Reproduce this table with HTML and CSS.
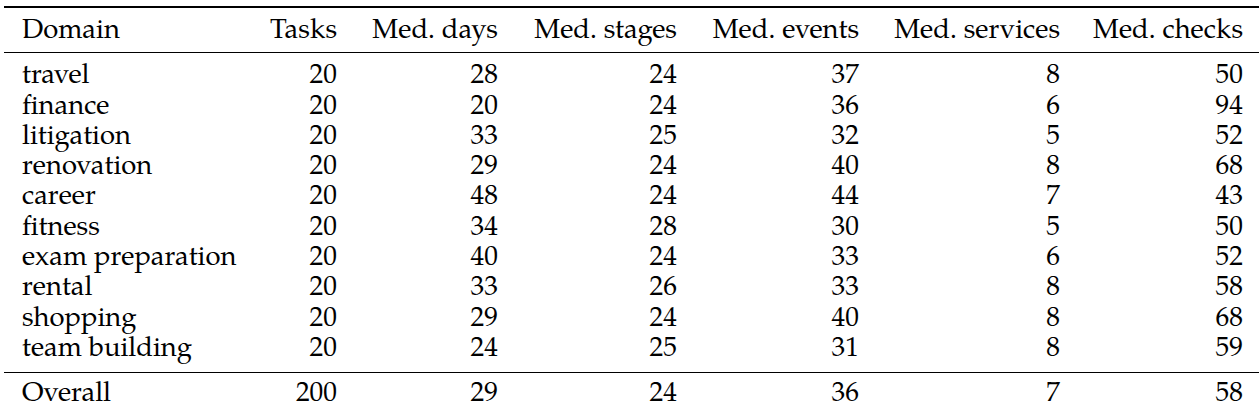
FILE: index.html
```html
<!DOCTYPE html>
<html lang="en">
<head>
<meta charset="utf-8">
<title>Domain statistics</title>
<link rel="stylesheet" href="styles.css">
</head>
<body>
<table class="stats">
  <colgroup>
    <col class="c-domain">
    <col class="c-tasks">
    <col class="c-days">
    <col class="c-stages">
    <col class="c-events">
    <col class="c-services">
    <col class="c-checks">
  </colgroup>
  <thead>
    <tr class="head">
      <th class="name">Domain</th>
      <th>Tasks</th>
      <th>Med. days</th>
      <th>Med. stages</th>
      <th>Med. events</th>
      <th>Med. services</th>
      <th>Med. checks</th>
    </tr>
  </thead>
  <tbody>
    <tr class="first"><td class="name">travel</td><td>20</td><td>28</td><td>24</td><td>37</td><td>8</td><td>50</td></tr>
    <tr><td class="name">finance</td><td>20</td><td>20</td><td>24</td><td>36</td><td>6</td><td>94</td></tr>
    <tr><td class="name">litigation</td><td>20</td><td>33</td><td>25</td><td>32</td><td>5</td><td>52</td></tr>
    <tr><td class="name">renovation</td><td>20</td><td>29</td><td>24</td><td>40</td><td>8</td><td>68</td></tr>
    <tr><td class="name">career</td><td>20</td><td>48</td><td>24</td><td>44</td><td>7</td><td>43</td></tr>
    <tr><td class="name">fitness</td><td>20</td><td>34</td><td>28</td><td>30</td><td>5</td><td>50</td></tr>
    <tr><td class="name">exam preparation</td><td>20</td><td>40</td><td>24</td><td>33</td><td>6</td><td>52</td></tr>
    <tr><td class="name">rental</td><td>20</td><td>33</td><td>26</td><td>33</td><td>8</td><td>58</td></tr>
    <tr><td class="name">shopping</td><td>20</td><td>29</td><td>24</td><td>40</td><td>8</td><td>68</td></tr>
    <tr class="last"><td class="name">team building</td><td>20</td><td>24</td><td>25</td><td>31</td><td>8</td><td>59</td></tr>
  </tbody>
  <tfoot>
    <tr class="total"><td class="name">Overall</td><td>200</td><td>29</td><td>24</td><td>36</td><td>7</td><td>58</td></tr>
  </tfoot>
</table>
</body>
</html>
```

FILE: styles.css
```css
html, body {
  margin: 0;
  padding: 0;
  background: #ffffff;
  overflow: hidden;
}

body {
  font-family: "P052", "TeX Gyre Pagella", "URW Palladio L", "Palatino Linotype", "Liberation Serif", serif;
  font-size: 27.4px;
  color: #000000;
}

.stats {
  margin: 6px 0 0 4px;
  width: 1255px;
  table-layout: fixed;
  border-collapse: separate;
  border-spacing: 0;
}

.c-domain { width: 250px; }
.c-tasks { width: 100px; }
.c-days { width: 161px; }
.c-stages { width: 179px; }
.c-events { width: 182px; }
.c-services { width: 201px; }
.c-checks { width: 182px; }

.stats th,
.stats td {
  font-weight: normal;
  line-height: 30.3px;
  padding: 0 17px 0 0;
  text-align: right;
  white-space: nowrap;
  vertical-align: top;
}

.stats th:last-child,
.stats td:last-child {
  padding-right: 16px;
}

.stats .name {
  text-align: left;
  padding-left: 18px;
  padding-right: 0;
}

.head th {
  border-top: 2px solid #000;
  border-bottom: 1px solid #000;
  padding-top: 8.5px;
  padding-bottom: 5.5px;
}

.first td {
  padding-top: 9px;
}

.last td {
  padding-bottom: 6.7px;
  border-bottom: 1px solid #000;
}

.total td {
  padding-top: 6.8px;
}
```
